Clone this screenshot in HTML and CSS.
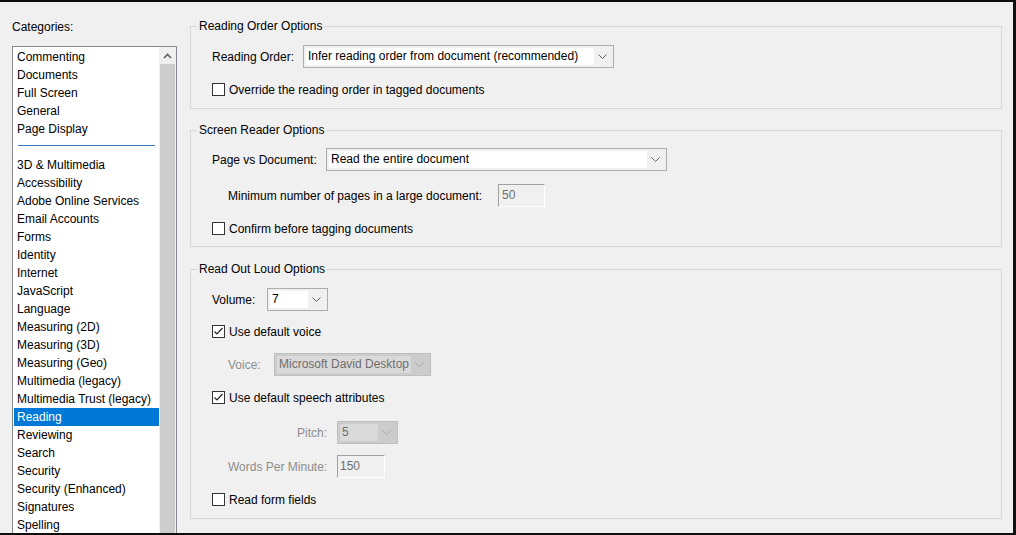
FILE: index.html
```html
<!DOCTYPE html>
<html>
<head>
<meta charset="utf-8">
<link rel="stylesheet" href="styles.css">
</head>
<body>
<div class="window">
  <aside class="sidebar">
    <div class="cat-label">Categories:</div>
    <div class="listbox">
      <ul class="list">
        <li>Commenting</li>
        <li>Documents</li>
        <li>Full Screen</li>
        <li>General</li>
        <li>Page Display</li>
        <li class="sep"></li>
        <li>3D &amp; Multimedia</li>
        <li>Accessibility</li>
        <li>Adobe Online Services</li>
        <li>Email Accounts</li>
        <li>Forms</li>
        <li>Identity</li>
        <li>Internet</li>
        <li>JavaScript</li>
        <li>Language</li>
        <li>Measuring (2D)</li>
        <li>Measuring (3D)</li>
        <li>Measuring (Geo)</li>
        <li>Multimedia (legacy)</li>
        <li>Multimedia Trust (legacy)</li>
        <li class="selected">Reading</li>
        <li>Reviewing</li>
        <li>Search</li>
        <li>Security</li>
        <li>Security (Enhanced)</li>
        <li>Signatures</li>
        <li>Spelling</li>
      </ul>
      <div class="vscroll">
        <div class="sb-up"><svg width="9" height="6" viewBox="0 0 9 6"><path d="M1 5 L4.5 1.5 L8 5" fill="none" stroke="#606060" stroke-width="1.6"/></svg></div>
        <div class="sb-thumb"></div>
      </div>
    </div>
  </aside>

  <main class="main">
    <fieldset class="group">
      <legend>Reading Order Options</legend>
      <div class="inner g1">
        <div class="row">
          <span class="lbl w-ro">Reading Order:</span>
          <div class="combo cw-ro"><span class="field">Infer reading order from document (recommended)</span><span class="arrow"><svg width="9" height="5" viewBox="0 0 9 5"><path d="M0.5 0.5 L4.5 4.5 L8.5 0.5" fill="none" stroke="#606060" stroke-width="1"/></svg></span></div>
        </div>
        <div class="chk-row gap12">
          <span class="cb"></span><span>Override the reading order in tagged documents</span>
        </div>
      </div>
    </fieldset>

    <fieldset class="group gm13">
      <legend>Screen Reader Options</legend>
      <div class="inner g2">
        <div class="row">
          <span class="lbl w-pd">Page vs Document:</span>
          <div class="combo cw-pd"><span class="field">Read the entire document</span><span class="arrow"><svg width="9" height="5" viewBox="0 0 9 5"><path d="M0.5 0.5 L4.5 4.5 L8.5 0.5" fill="none" stroke="#606060" stroke-width="1"/></svg></span></div>
        </div>
        <div class="row gap13 indent">
          <span class="lbl w-min">Minimum number of pages in a large document:</span>
          <div class="tinput tw-min">50</div>
        </div>
        <div class="chk-row gap12">
          <span class="cb"></span><span>Confirm before tagging documents</span>
        </div>
      </div>
    </fieldset>

    <fieldset class="group gm14">
      <legend>Read Out Loud Options</legend>
      <div class="inner g3">
        <div class="row">
          <span class="lbl w-vol">Volume:</span>
          <div class="combo cw-vol"><span class="field">7</span><span class="arrow"><svg width="9" height="5" viewBox="0 0 9 5"><path d="M0.5 0.5 L4.5 4.5 L8.5 0.5" fill="none" stroke="#606060" stroke-width="1"/></svg></span></div>
        </div>
        <div class="chk-row gap11">
          <span class="cb"><svg width="11" height="11" viewBox="0 0 11 11"><path d="M1.5 5.5 L4 8 L9.5 2" fill="none" stroke="#222" stroke-width="1.2"/></svg></span><span>Use default voice</span>
        </div>
        <div class="row gap12 indent">
          <span class="lbl w-voice dis">Voice:</span>
          <div class="combo disabled cw-voice"><span class="field">Microsoft David Desktop</span><span class="arrow"><svg width="9" height="5" viewBox="0 0 9 5"><path d="M0.5 0.5 L4.5 4.5 L8.5 0.5" fill="none" stroke="#a8a8a8" stroke-width="1"/></svg></span></div>
        </div>
        <div class="chk-row gap12">
          <span class="cb"><svg width="11" height="11" viewBox="0 0 11 11"><path d="M1.5 5.5 L4 8 L9.5 2" fill="none" stroke="#222" stroke-width="1.2"/></svg></span><span>Use default speech attributes</span>
        </div>
        <div class="row gap14 indent">
          <span class="lbl w-right dis">Pitch:</span>
          <div class="combo disabled cw-pitch"><span class="field">5</span><span class="arrow"><svg width="9" height="5" viewBox="0 0 9 5"><path d="M0.5 0.5 L4.5 4.5 L8.5 0.5" fill="none" stroke="#a8a8a8" stroke-width="1"/></svg></span></div>
        </div>
        <div class="row gap11 indent">
          <span class="lbl w-right dis">Words Per Minute:</span>
          <div class="tinput tw-wpm">150</div>
        </div>
        <div class="chk-row gap12">
          <span class="cb"></span><span>Read form fields</span>
        </div>
      </div>
    </fieldset>
  </main>
</div>
</body>
</html>
```

FILE: styles.css
```css
* { box-sizing: border-box; }
html, body { margin: 0; padding: 0; background: #111; }
body {
  font-family: "Liberation Sans", Arial, sans-serif;
  font-size: 12px;
  color: #000;
}
.window {
  width: 1016px;
  height: 535px;
  border-top: 2px solid #0d0d0d;
  border-right: 3px solid #111;
  border-bottom: 2px solid #0d0d0d;
  background: #f0f0f0;
  display: flex;
  overflow: hidden;
}

/* sidebar */
.sidebar {
  width: 177px;
  flex-shrink: 0;
  padding-left: 12px;
  display: flex;
  flex-direction: column;
}
.cat-label {
  margin-top: 17px;
  line-height: 16px;
  height: 16px;
}
.listbox {
  margin-top: 11px;
  flex-shrink: 0;
  height: 520px;
  border: 1px solid #828790;
  background: #fff;
  display: flex;
}
.list {
  list-style: none;
  margin: 0;
  padding: 1px 0 0 1px;
  width: 146px;
}
.list li {
  height: 18px;
  line-height: 18px;
  padding-left: 3px;
  white-space: nowrap;
}
.list li.selected {
  background: #0078d7;
  color: #fff;
}
.list li.sep {
  padding: 7px 4px 0 4px;
}
.list li.sep::before {
  content: "";
  display: block;
  height: 1px;
  background: #3b7bc4;
}
.vscroll {
  width: 17px;
  padding: 0 1px;
  background: #f0f0f0;
  display: flex;
  flex-direction: column;
}
.sb-up {
  height: 17px;
  display: flex;
  align-items: center;
  justify-content: center;
}
.sb-thumb {
  flex: 1;
  background: #cdcdcd;
}

/* main */
.main {
  flex: 1;
  margin-left: 13px;
  padding: 16px 11px 0 0;
  display: flex;
  flex-direction: column;
}
.group {
  margin: 0;
  padding: 0;
  min-width: 0;
  border: 1px solid #d7d7d7;
}
.group legend {
  margin-left: 6px;
  padding: 0 2px;
  line-height: 16px;
}
.gm13 { margin-top: 13px; }
.gm14 { margin-top: 14px; }
.inner { padding-left: 21px; }
.g1 { padding-top: 11px; padding-bottom: 9px; }
.g2 { padding-top: 10px; padding-bottom: 8px; }
.g3 { padding-top: 11px; padding-bottom: 9px; }

.row {
  display: flex;
  align-items: center;
  height: 23px;
}
.chk-row {
  display: flex;
  align-items: center;
  height: 19px;
}
.gap11 { margin-top: 11px; }
.gap12 { margin-top: 12px; }
.gap13 { margin-top: 13px; }
.gap14 { margin-top: 14px; }
.indent { margin-left: 16px; }

.lbl { flex-shrink: 0; white-space: nowrap; }
.w-ro { width: 91px; }
.w-pd { width: 114px; }
.w-min { width: 270px; }
.w-vol { width: 55px; }
.w-voice { width: 46px; }
.w-right { width: 99px; text-align: right; margin-right: 10px; }
.dis { color: #8d8d8d; }

.combo {
  display: flex;
  height: 23px;
  border: 1px solid #adadad;
  padding: 2px;
  background: #f0f0f0;
}
.combo .field {
  flex: 1;
  background: #fff;
  padding-left: 2px;
  line-height: 17px;
  white-space: nowrap;
  overflow: hidden;
}
.combo .arrow {
  width: 17px;
  display: flex;
  align-items: center;
  justify-content: center;
}
.combo.disabled {
  border-color: #bfbfbf;
  background: #cccccc;
  color: #6d6d6d;
}
.combo.disabled .field { background: #dadada; }
.cw-ro { width: 311px; }
.cw-pd { width: 341px; }
.cw-vol { width: 61px; }
.cw-voice { width: 157px; }
.cw-pitch { width: 61px; }

.tinput {
  height: 23px;
  border: 1px solid;
  border-color: #a0a0a0 #ffffff #ffffff #a0a0a0;
  background: #f0f0f0;
  color: #6d6d6d;
  line-height: 21px;
  padding-left: 3px;
}
.tw-min { width: 47px; }
.tw-wpm { width: 48px; padding-left: 2px; }

.cb {
  width: 13px;
  height: 13px;
  border: 1px solid #333;
  background: #fff;
  margin-right: 4px;
  flex-shrink: 0;
  display: flex;
  align-items: center;
  justify-content: center;
}
.cb svg { display: block; }
```
